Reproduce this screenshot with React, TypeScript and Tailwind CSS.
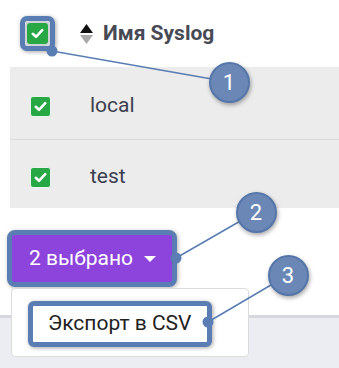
import React from "react";

const Check = ({ ring = false }: { ring?: boolean }) => (
  <div
    className={
      "flex h-[21px] w-[21px] items-center justify-center rounded-[3px] bg-[#28a745] " +
      (ring ? "ring-2 ring-[#cfd3d6]" : "border border-[#e9f5ec]")
    }
  >
    <svg width="13" height="11" viewBox="0 0 13 11">
      <path d="M1.8 5.8 L5 8.8 L11.2 2.2" fill="none" stroke="#fff" strokeWidth="2.6" strokeLinecap="round" strokeLinejoin="round" />
    </svg>
  </div>
);

const Callout = ({ n, x, y }: { n: string; x: number; y: number }) => (
  <div
    className="absolute flex h-[41px] w-[41px] items-center justify-center rounded-full border-2 border-[#5576aa] bg-[#6a87b6] text-[22px] text-white shadow-[1px_2px_4px_rgba(0,0,0,0.35)]"
    style={{ left: x - 20.5, top: y - 20.5, fontFamily: "Roboto, sans-serif" }}
  >
    {n}
  </div>
);

export default function App() {
  return (
    <div className="relative flex h-[368px] w-[339px] flex-col overflow-hidden bg-white" style={{ fontFamily: "Roboto, 'Noto Sans', sans-serif" }}>
      <div className="flex h-[315px] flex-col">
        {/* header */}
        <div className="flex h-[67px] items-center pl-[20px]">
          <div className="flex h-[35px] w-[35px] items-center justify-center rounded-[7px] border-[5px] border-[#5a7db4] bg-[#e2e4e6] shadow-[1px_1px_4px_rgba(0,0,0,0.35)]">
            <Check ring />
          </div>
          <div className="ml-[25px] flex flex-col items-center gap-[2px]">
            <svg width="13" height="9" viewBox="0 0 13 9"><path d="M6.5 0 L13 9 L0 9 Z" fill="#111" /></svg>
            <svg width="13" height="9" viewBox="0 0 13 9"><path d="M0 0 L13 0 L6.5 9 Z" fill="#aaaaaa" /></svg>
          </div>
          <div className="ml-[10px] text-[21px] font-bold text-[#474a54]">Имя Syslog</div>
        </div>
        {/* rows */}
        <div className="ml-[10px] bg-[#ececec] text-[#3c3f4f]">
          <div className="flex h-[72px] items-center pl-[20px] pt-[6px] text-[21px]">
            <Check />
            <span className="ml-[39px]">local</span>
          </div>
          <div className="h-px bg-[#dadada]" />
          <div className="flex h-[68px] items-center pl-[20px] pt-[6px] text-[21px]">
            <Check />
            <span className="ml-[39px]">test</span>
          </div>
        </div>
        {/* button */}
        <div className="ml-[7px] mt-[22px] flex h-[57px] w-[170px] rounded-[8px] border-[5px] border-[#5a7db4] bg-[#5a7db4] shadow-[1px_1px_4px_rgba(0,0,0,0.3)]">
          <div className="flex flex-1 items-center rounded-[3px] bg-[#8c44dc] pl-[17px] text-[21px] text-white">
            <span>2 выбрано</span>
            <svg className="ml-[11px]" width="12" height="6" viewBox="0 0 12 6"><path d="M0 0 L12 0 L6 6 Z" fill="#fff" /></svg>
          </div>
        </div>
      </div>
      <div className="flex-1 border-t-[3px] border-[#d6d8dd] bg-[#ebedf2]" />

      {/* dropdown menu */}
      <div className="absolute left-[11px] top-[288px] h-[69px] w-[238px] rounded-[4px] border border-[#dcdcdc] bg-white pl-[16px] pt-[12px]">
        <div className="flex h-[46px] w-[184px] items-center rounded-[6px] border-[5px] border-[#5a7db4] bg-white pl-[15px] text-[21px] text-[#222] shadow-[1px_1px_4px_rgba(0,0,0,0.35)]">
          Экспорт в CSV
        </div>
      </div>

      {/* callout lines */}
      <svg className="pointer-events-none absolute left-0 top-0" width="339" height="368">
        <line x1="52" y1="51" x2="229" y2="82" stroke="#5a7db4" strokeWidth="1.5" />
        <line x1="176" y1="258" x2="256" y2="212" stroke="#5a7db4" strokeWidth="1.5" />
        <line x1="208" y1="322" x2="288" y2="275" stroke="#5a7db4" strokeWidth="1.5" />
        <circle cx="52" cy="51" r="5.5" fill="#5a7db4" />
        <circle cx="176" cy="258" r="5.5" fill="#5a7db4" />
        <circle cx="208" cy="322" r="5.5" fill="#5a7db4" />
      </svg>
      <Callout n="1" x={229} y={82} />
      <Callout n="2" x={256} y={212} />
      <Callout n="3" x={288} y={275} />
    </div>
  );
}
